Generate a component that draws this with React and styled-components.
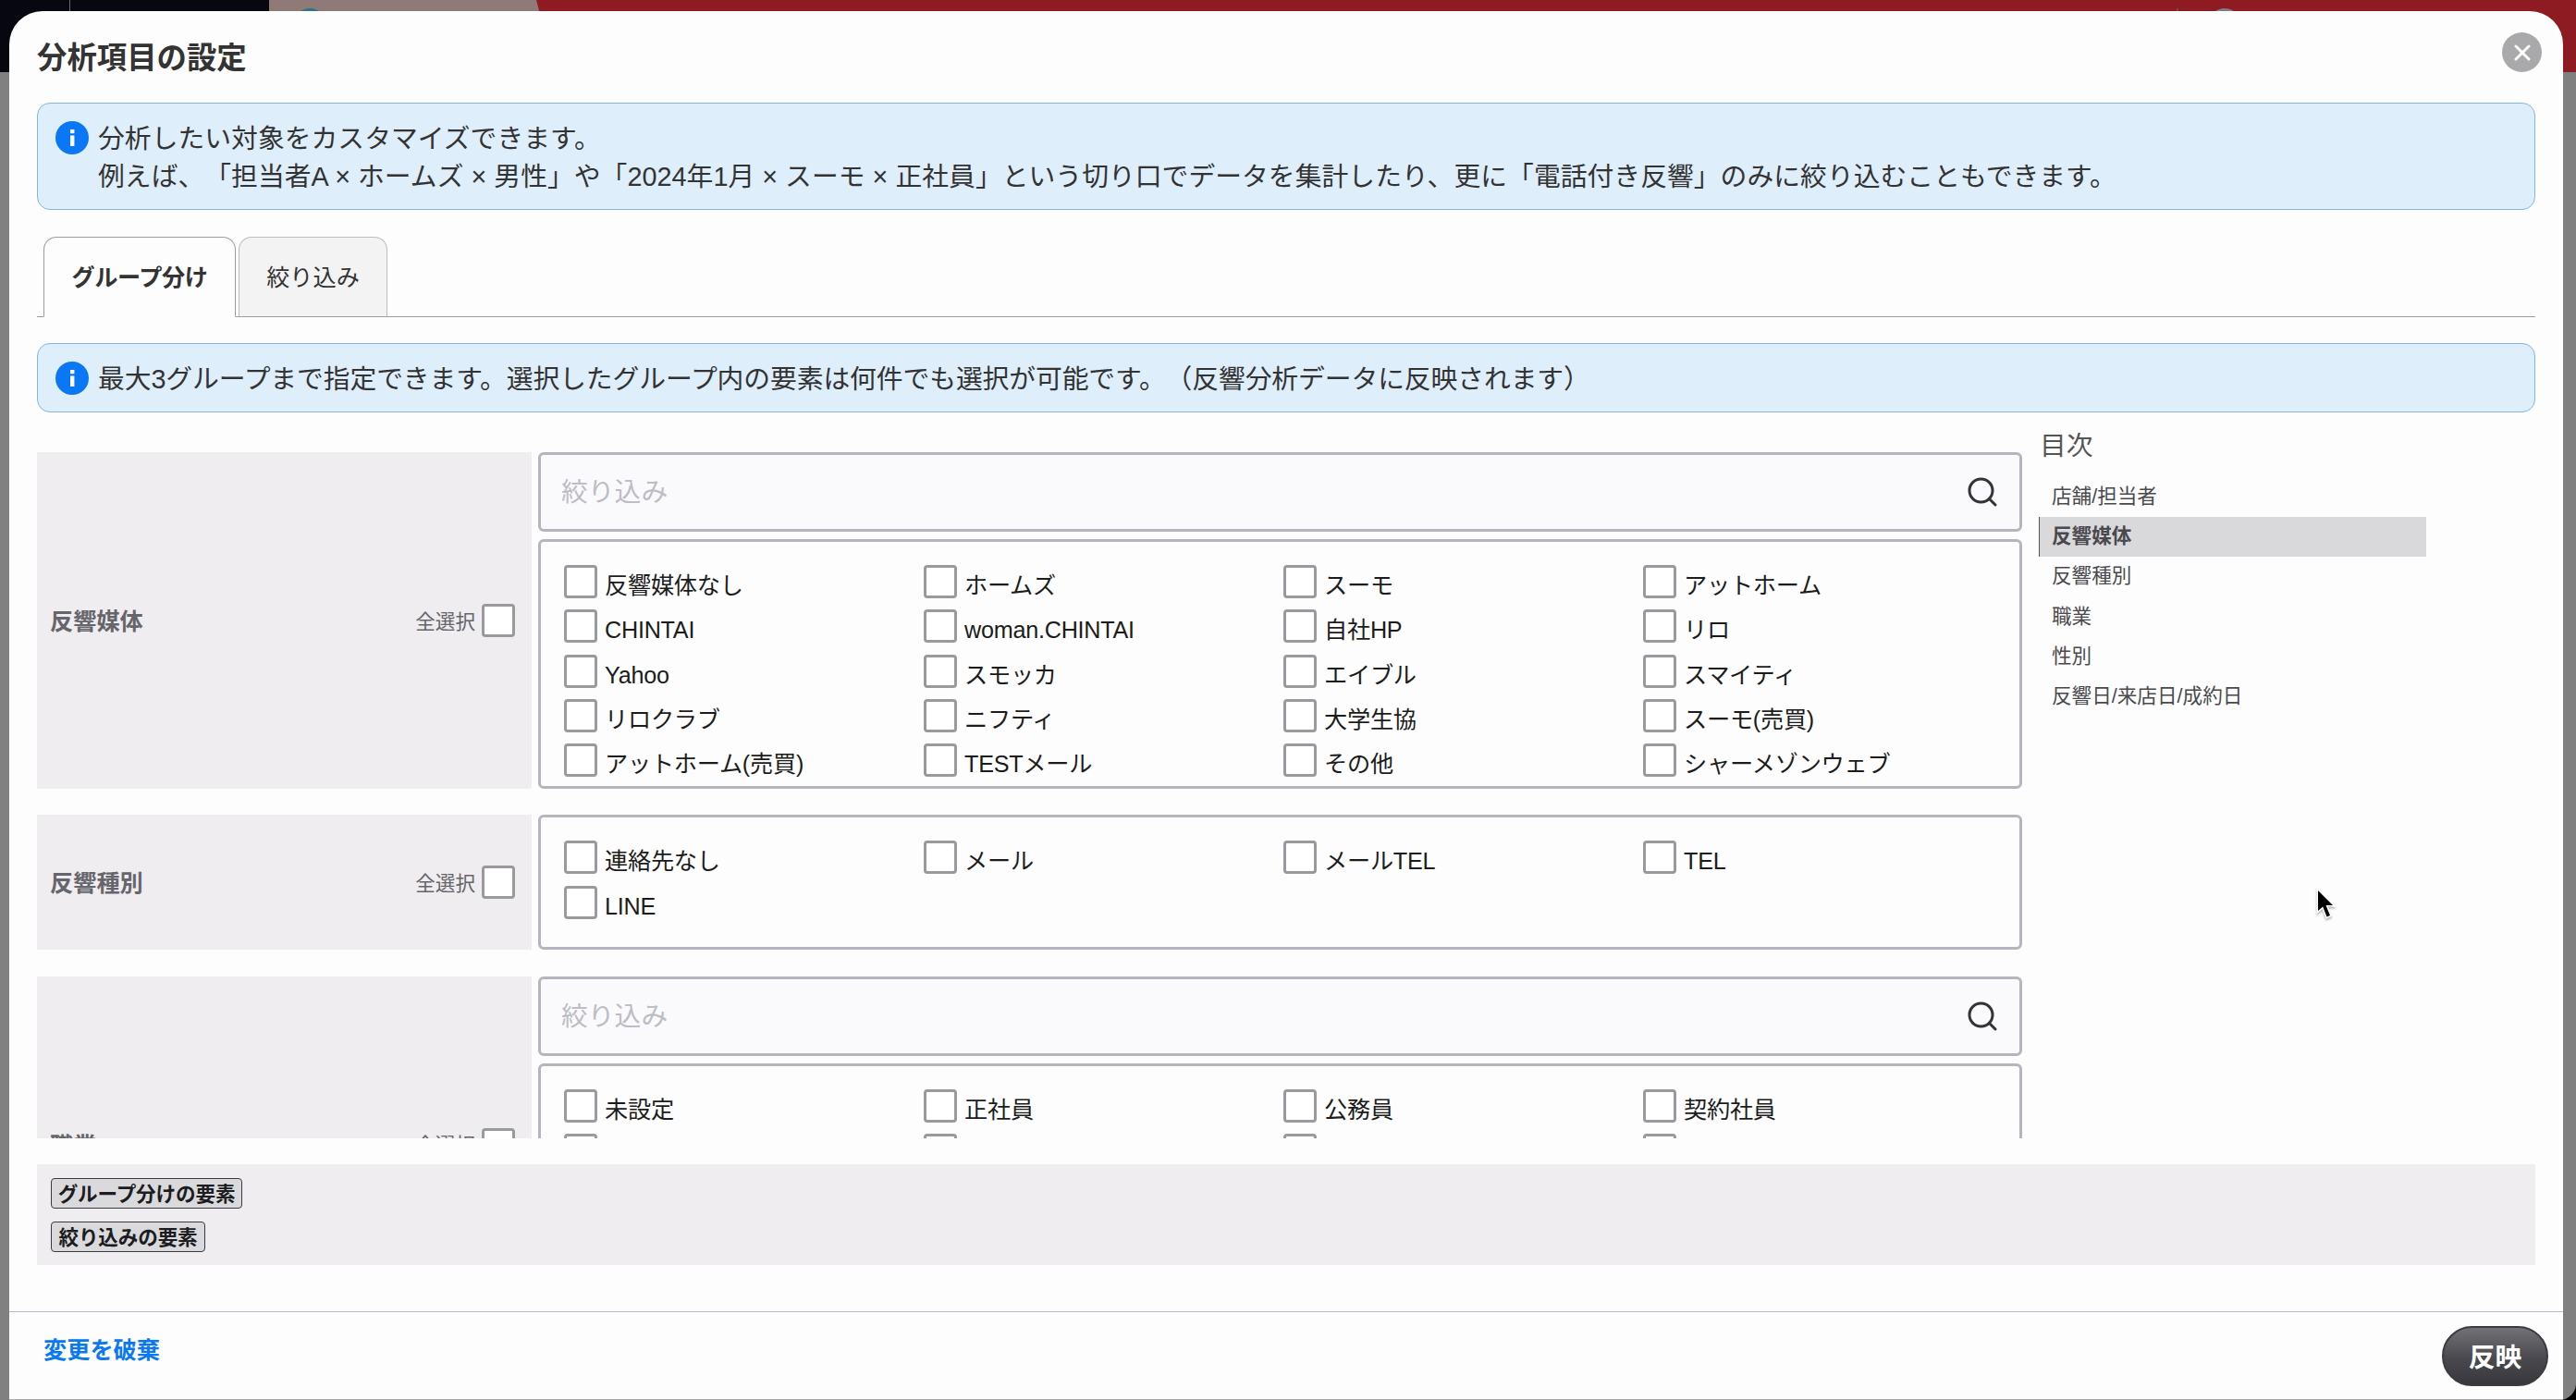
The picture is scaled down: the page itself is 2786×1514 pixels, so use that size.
import React from "react";
import styled, { createGlobalStyle } from "styled-components";

const GlobalStyle = createGlobalStyle`
  * {
    box-sizing: border-box;
  }
  body {
    margin: 0;
    overflow: hidden;
    background: #000;
    font-family: "Liberation Sans", "Noto Sans CJK JP", sans-serif;
    font-size: 25.2px;
    color: #333;
    text-spacing-trim: space-all;
  }
`;

const Page = styled.div`
  position: relative;
  width: 100vw;
  height: 100vh;
  overflow: hidden;
  background: #808080;
  border-bottom-right-radius: 18px;
`;
const TopBar = styled.div`
  display: flex;
  height: 78px;
  background: #8d1b21;
`;
const BarDark = styled.div`
  width: ${(props) => props.$width}px;
  background: #07070f;
  border-right: ${(props) => (props.$line ? "1px solid #6a6a72" : "none")};
`;
const BarArt = styled.svg`
  display: block;
  width: 2495px;
  height: 78px;
`;

const Modal = styled.div`
  position: absolute;
  top: 12px;
  left: 10px;
  width: 2762px;
  height: 1502px;
  display: flex;
  flex-direction: column;
  background: #fdfdfd;
  border-radius: 36px 36px 0 0;
  border-bottom: 1px solid #a8a8a8;
  overflow: hidden;
`;
const Header = styled.div`
  height: 99px;
  padding: 23px 23px 0 30px;
  display: flex;
  justify-content: space-between;
  align-items: flex-start;
`;
const Title = styled.h1`
  margin: 0;
  padding-top: 4px;
  font-size: 32.4px;
  line-height: 48px;
  font-weight: bold;
`;
const CloseButton = styled.button`
  width: 43px;
  height: 43px;
  padding: 0;
  display: flex;
  align-items: center;
  justify-content: center;
  border: none;
  border-radius: 50%;
  background: #a9a9ab;
`;

const Body = styled.div`
  flex: none;
  height: 1307px;
  padding: 0 30px;
  display: flex;
  flex-direction: column;
`;
const Info = styled.div`
  display: flex;
  flex: none;
  gap: 10px;
  height: ${(props) => props.$height}px;
  padding: 18px 18px 0 19px;
  background: #dfeefb;
  border: 1px solid #82b6e6;
  border-radius: 14px;
  font-size: 28.8px;
  line-height: 40.8px;
  letter-spacing: ${(props) => props.$spacing || 0}px;
  white-space: nowrap;
  svg {
    flex: none;
    margin-top: 1px;
  }
`;

const Tabs = styled.div`
  display: flex;
  flex: none;
  gap: 3px;
  height: 87px;
  margin: 29px 0 28px;
  border-bottom: 1px solid #9c9ca4;
  padding-left: 7px;
`;
const Tab = styled.button`
  width: ${(props) => props.$width}px;
  height: 87px;
  padding: 0 0 3px;
  font: inherit;
  font-weight: ${(props) => (props.$active ? "bold" : "normal")};
  letter-spacing: ${(props) => (props.$active ? "-0.4px" : "0")};
  white-space: nowrap;
  color: #333;
  background: ${(props) => (props.$active ? "#fdfdfd" : "#f3f3f4")};
  border: 1px solid ${(props) => (props.$active ? "#9c9ca4" : "#bcbcc4")};
  border-bottom-color: ${(props) => (props.$active ? "#fdfdfd" : "#9c9ca4")};
  border-radius: 14px 14px 0 0;
`;

const Content = styled.div`
  display: flex;
  flex: none;
  height: 785px;
  overflow: hidden;
`;
const Sections = styled.div`
  width: 2147px;
  margin-top: 43px;
  display: flex;
  flex-direction: column;
  gap: 28.4px;
  overflow: hidden;
`;
const Section = styled.div`
  display: flex;
  flex: none;
  gap: 7px;
  height: ${(props) => props.$height}px;
`;
const SectionHead = styled.div`
  width: 535px;
  padding: 0 18px 0 14px;
  display: flex;
  align-items: center;
  justify-content: space-between;
  background: #efedef;
  color: #66656c;
  font-weight: bold;
  span {
    padding-bottom: 2px;
  }
`;
const SelectAll = styled.label`
  display: flex;
  align-items: center;
  gap: 7px;
  font-size: 21.6px;
  font-weight: normal;
`;
const SectionMain = styled.div`
  flex: 1;
  display: flex;
  flex-direction: column;
  gap: 8px;
`;
const Search = styled.div`
  height: 86px;
  flex: none;
  padding: 0 24px 0 22px;
  display: flex;
  align-items: center;
  justify-content: space-between;
  border: 3px solid #b5b5bd;
  border-radius: 6px;
  background: #fafafc;
  color: #bdbdc5;
  font-size: 28.8px;
  span {
    padding-bottom: 5px;
  }
`;
const Options = styled.div`
  flex: 1;
  min-height: 0;
  padding: 25px 0 0 25px;
  display: grid;
  grid-template-columns: repeat(4, 389px);
  grid-auto-rows: 48.3px;
  align-content: start;
  border: 3px solid #b5b5bd;
  border-radius: 6px;
`;
const Option = styled.label`
  display: flex;
  align-items: flex-start;
  gap: 8px;
  color: #1c1c1c;
  line-height: 36px;
  letter-spacing: -0.25px;
  white-space: nowrap;
  span {
    padding-top: 4px;
  }
`;
const Check = styled.i`
  flex: none;
  width: 36px;
  height: 36px;
  border: 3px solid #9a9a9e;
  border-radius: 4px;
  background: #fff;
`;

const Toc = styled.div`
  width: 419px;
  margin-left: 18px;
  padding-top: 15px;
  color: #555;
`;
const TocTitle = styled.div`
  height: 55px;
  padding-left: 1px;
  font-size: 28.8px;
  line-height: 42px;
`;
const TocItem = styled.div`
  height: 43.2px;
  line-height: 42.6px;
  padding-left: 13px;
  font-size: 21.6px;
  color: #4a4a4e;
  border-left: 1px solid ${(props) => (props.$active ? "#555" : "transparent")};
  background: ${(props) => (props.$active ? "#d9d9db" : "none")};
  font-weight: ${(props) => (props.$active ? "bold" : "normal")};
`;

const Summary = styled.div`
  flex: none;
  height: 109px;
  margin-top: 28px;
  padding: 15px;
  display: flex;
  flex-direction: column;
  align-items: flex-start;
  gap: 14px;
  background: #efedef;
`;
const Tag = styled.div`
  width: ${(props) => props.$width}px;
  height: 33px;
  padding-bottom: 3px;
  display: flex;
  align-items: center;
  justify-content: center;
  border: 1px solid #3a3a44;
  border-radius: 4px;
  background: #dadadc;
  color: #1c1c22;
  font-size: 21.6px;
  font-weight: bold;
  letter-spacing: -0.15px;
  white-space: nowrap;
`;

const Footer = styled.div`
  flex: 1;
  display: flex;
  justify-content: space-between;
  align-items: flex-start;
  padding: 15px 16px 0 37px;
  border-top: 1px solid #b9b9d4;
`;
const Discard = styled.a`
  padding-top: 8px;
  line-height: 36px;
  color: #0a78f0;
  font-weight: bold;
`;
const Apply = styled.button`
  width: 115px;
  height: 65px;
  padding: 0 0 3px;
  border: 2px solid #3b3b40;
  border-radius: 33px;
  background: linear-gradient(#727276, #48484e 55%, #38383c);
  color: #fff;
  font: inherit;
  font-size: 28.8px;
  font-weight: bold;
`;
const Pointer = styled.svg`
  position: absolute;
  left: 2503px;
  top: 958px;
  filter: drop-shadow(0 2px 1px rgba(0, 0, 0, 0.3));
`;

const InfoIcon = () => (
  <svg width="36" height="36" viewBox="0 0 36 36">
    <circle cx="18" cy="18" r="18" fill="#0a78f5" />
    <rect x="16" y="9" width="4.4" height="4.2" fill="#fff" />
    <rect x="16" y="15.5" width="4.4" height="11.5" fill="#fff" />
  </svg>
);

const SearchIcon = () => (
  <svg width="32" height="32" viewBox="0 0 32 32" fill="none" stroke="#33333a" strokeWidth="3" strokeLinecap="round">
    <circle cx="14.5" cy="14.5" r="12.5" />
    <path d="M23.5 23.5L30 30" />
  </svg>
);

const sections = [
  {
    name: "反響媒体",
    height: 364,
    search: true,
    options: [
      "反響媒体なし", "ホームズ", "スーモ", "アットホーム",
      "CHINTAI", "woman.CHINTAI", "自社HP", "リロ",
      "Yahoo", "スモッカ", "エイブル", "スマイティ",
      "リロクラブ", "ニフティ", "大学生協", "スーモ(売買)",
      "アットホーム(売買)", "TESTメール", "その他", "シャーメゾンウェブ",
    ],
  },
  {
    name: "反響種別",
    height: 146,
    options: ["連絡先なし", "メール", "メールTEL", "TEL", "LINE"],
  },
  {
    name: "職業",
    height: 364,
    search: true,
    options: ["未設定", "正社員", "公務員", "契約社員", "", "", "", ""],
  },
];

const toc = ["店舗/担当者", "反響媒体", "反響種別", "職業", "性別", "反響日/来店日/成約日"];

const App = () => {
  return (
    <Page>
      <GlobalStyle />
      <TopBar>
        <BarDark $width={76} $line />
        <BarDark $width={215} />
        <BarArt viewBox="0 0 2495 78">
          <path d="M0 0H289L310 78H0z" fill="#8f7a78" />
          <circle cx="44" cy="26" r="17" fill="#2d7585" />
          <path d="M2064 9v20" stroke="#77706c" />
          <circle cx="2115" cy="26" r="17" fill="#807d88" />
        </BarArt>
      </TopBar>
      <Modal>
        <Header>
          <Title>分析項目の設定</Title>
          <CloseButton>
            <svg width="18" height="18" viewBox="0 0 18 18" stroke="#fff" strokeWidth="3" strokeLinecap="round">
              <path d="M2 2L16 16M16 2L2 16" />
            </svg>
          </CloseButton>
        </Header>
        <Body>
          <Info $height={116} $spacing={0.02}>
            <InfoIcon />
            <div>
              分析したい対象をカスタマイズできます。
              <br />
              例えば、「担当者A × ホームズ × 男性」や「2024年1月 × スーモ × 正社員」という切り口でデータを集計したり、更に「電話付き反響」のみに絞り込むこともできます。
            </div>
          </Info>
          <Tabs>
            <Tab $width={208} $active>グループ分け</Tab>
            <Tab $width={161}>絞り込み</Tab>
          </Tabs>
          <Info $height={75} $spacing={-0.1}>
            <InfoIcon />
            <div>最大3グループまで指定できます。選択したグループ内の要素は何件でも選択が可能です。（反響分析データに反映されます）</div>
          </Info>
          <Content>
            <Sections>
              {sections.map((section) => (
                <Section key={section.name} $height={section.height}>
                  <SectionHead>
                    <span>{section.name}</span>
                    <SelectAll>
                      <span>全選択</span>
                      <Check />
                    </SelectAll>
                  </SectionHead>
                  <SectionMain>
                    {section.search && (
                      <Search>
                        <span>絞り込み</span>
                        <SearchIcon />
                      </Search>
                    )}
                    <Options>
                      {section.options.map((option, i) => (
                        <Option key={i}>
                          <Check />
                          <span>{option}</span>
                        </Option>
                      ))}
                    </Options>
                  </SectionMain>
                </Section>
              ))}
            </Sections>
            <Toc>
              <TocTitle>目次</TocTitle>
              {toc.map((item) => (
                <TocItem key={item} $active={item === "反響媒体"}>
                  {item}
                </TocItem>
              ))}
            </Toc>
          </Content>
          <Summary>
            <Tag $width={207}>グループ分けの要素</Tag>
            <Tag $width={167}>絞り込みの要素</Tag>
          </Summary>
        </Body>
        <Footer>
          <Discard>変更を破棄</Discard>
          <Apply>反映</Apply>
        </Footer>
      </Modal>
      <Pointer width="26" height="42" viewBox="0 0 26 42">
        <path
          d="M4 5V27L9.2 22.5L13.5 33.5L17 32L12.5 21H20z"
          fill="#000"
          stroke="#fff"
          strokeWidth="3"
          paintOrder="stroke"
        />
      </Pointer>
    </Page>
  );
};

export default App;
